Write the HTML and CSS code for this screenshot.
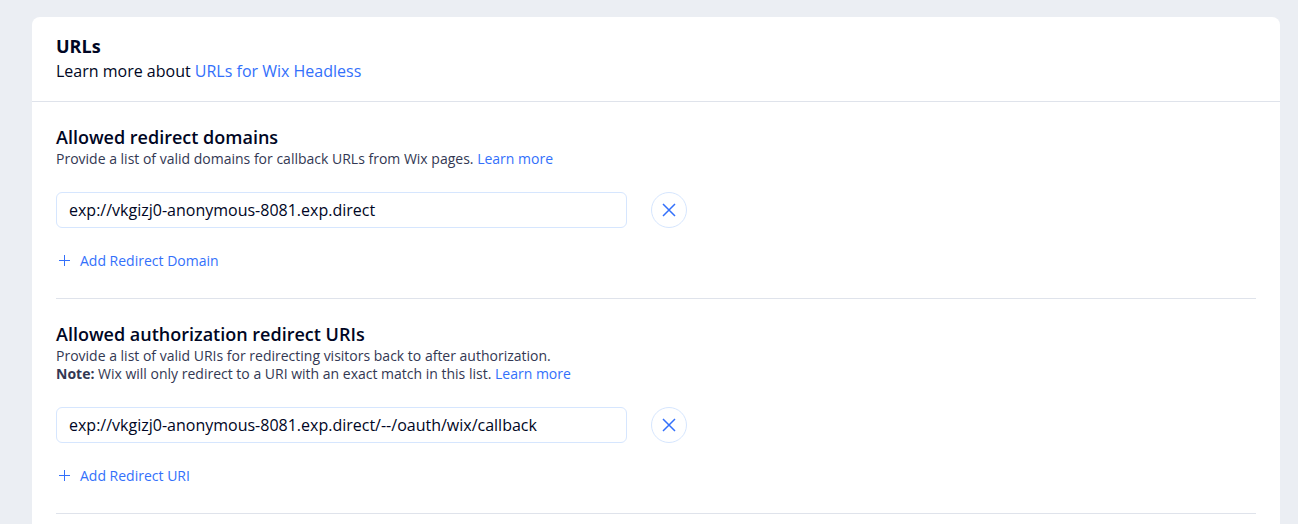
FILE: index.html
```html
<!DOCTYPE html>
<html lang="en">
<head>
<meta charset="utf-8">
<title>URLs</title>
<link rel="stylesheet" href="styles.css">
</head>
<body>
<main class="card">
  <header class="card-header">
    <h1 class="card-title">URLs</h1>
    <p class="card-subtitle">Learn more about <a class="link" href="#">URLs for Wix Headless</a></p>
  </header>
  <div class="card-content">
    <section class="section">
      <h2 class="section-title" id="domains-title">Allowed redirect domains</h2>
      <p class="section-text">Provide a list of valid domains for callback URLs from Wix pages. <a class="link" href="#">Learn more</a></p>
      <div class="field-row">
        <input class="field" type="text" aria-labelledby="domains-title" value="exp://vkgizj0-anonymous-8081.exp.direct">
        <button class="remove" type="button" aria-label="Remove domain">
          <svg class="remove-icon" viewBox="0 0 14 14" aria-hidden="true"><path d="M1 1L13 13M13 1L1 13"/></svg>
        </button>
      </div>
      <button class="add" type="button">
        <svg class="add-icon" viewBox="0 0 11 11" aria-hidden="true"><path d="M5.5 0V11M0 5.5H11"/></svg>
        <span>Add Redirect Domain</span>
      </button>
    </section>
    <section class="section">
      <h2 class="section-title" id="uris-title">Allowed authorization redirect URIs</h2>
      <p class="section-text">Provide a list of valid URIs for redirecting visitors back to after authorization.<br><strong>Note:</strong> Wix will only redirect to a URI with an exact match in this list. <a class="link" href="#">Learn more</a></p>
      <div class="field-row">
        <input class="field" type="text" aria-labelledby="uris-title" value="exp://vkgizj0-anonymous-8081.exp.direct/--/oauth/wix/callback">
        <button class="remove" type="button" aria-label="Remove URI">
          <svg class="remove-icon" viewBox="0 0 14 14" aria-hidden="true"><path d="M1 1L13 13M13 1L1 13"/></svg>
        </button>
      </div>
      <button class="add" type="button">
        <svg class="add-icon" viewBox="0 0 11 11" aria-hidden="true"><path d="M5.5 0V11M0 5.5H11"/></svg>
        <span>Add Redirect URI</span>
      </button>
    </section>
  </div>
</main>
</body>
</html>
```
FILE: styles.css
```css
* {
  box-sizing: border-box;
}

body {
  display: flex;
  min-height: 100vh;
  margin: 0;
  padding: 17px 18px 0 32px;
  background: #ebeef3;
  color: #000624;
  font-family: "Open Sans", sans-serif;
  font-size: 16px;
  line-height: 24px;
}

h1,
h2,
p {
  margin: 0;
}

.card {
  flex: 1;
  min-width: 0;
  background: #fff;
  border-radius: 8px 8px 0 0;
}

.card-header {
  padding: 17px 24px;
  border-bottom: 1px solid #dfe3eb;
}

.card-title {
  font-size: 18px;
  font-weight: 700;
  line-height: 24px;
}

.card-subtitle {
  line-height: 26px;
}

.card-content {
  padding: 0 24px;
}

.section {
  padding: 23px 0 28px;
  border-bottom: 1px solid #dfe3eb;
}

.section-title {
  font-size: 18px;
  font-weight: 600;
  line-height: 24px;
}

.section-text {
  padding-top: 1px;
  color: #333853;
  font-size: 14px;
  line-height: 18px;
}

.link {
  color: #3370fb;
  text-decoration: none;
}

.field-row {
  display: flex;
  gap: 24px;
  margin-top: 24px;
}

.field {
  flex: 0 1 571px;
  min-width: 0;
  height: 36px;
  padding: 0 12px;
  border: 1px solid #d6e6fe;
  border-radius: 6px;
  background: #fff;
  color: #000624;
  font: inherit;
}

.remove {
  display: flex;
  flex: none;
  align-items: center;
  justify-content: center;
  width: 36px;
  height: 36px;
  padding: 0;
  border: 1px solid #d6e6fe;
  border-radius: 50%;
  background: #fff;
  color: #3370fb;
}

.remove-icon {
  width: 14px;
  height: 14px;
}

.add-icon {
  width: 11px;
  height: 11px;
}

.remove-icon path,
.add-icon path {
  fill: none;
  stroke: #3370fb;
}

.remove-icon path {
  stroke-width: 1.5;
}

.add {
  display: flex;
  align-items: center;
  gap: 10px;
  margin-top: 23px;
  padding: 0 3px;
  border: 0;
  background: none;
  color: #3370fb;
  font: inherit;
  font-size: 14px;
  line-height: 19px;
}
```
